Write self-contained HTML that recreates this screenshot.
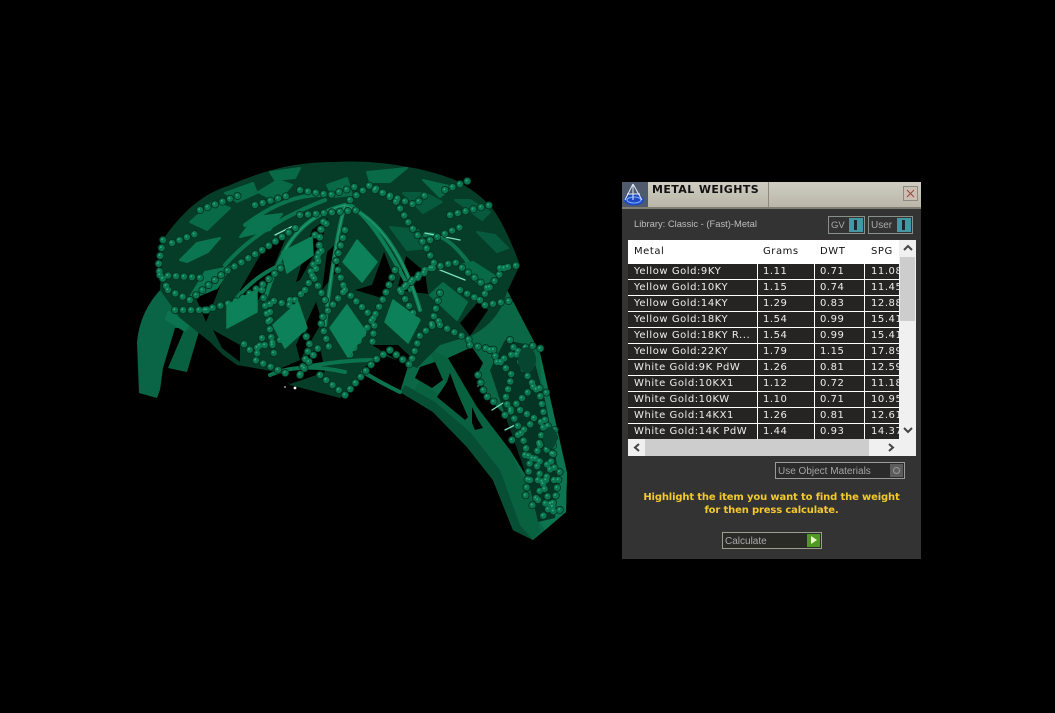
<!DOCTYPE html>
<html><head><meta charset="utf-8"><title>Metal Weights</title>
<style>
html,body{margin:0;padding:0;background:#000;width:1055px;height:713px;overflow:hidden}
body{position:relative;font-family:"DejaVu Sans","Liberation Sans",sans-serif}
.a{position:absolute;white-space:nowrap}
#panel{left:622px;top:182px;width:299px;height:377px;background:#333;overflow:hidden}
.row{position:absolute;left:6px;width:271px;height:15px;background:#262422;color:#eee;font-size:10px;line-height:15px;letter-spacing:.55px;overflow:hidden}
.row span{position:absolute;top:0}
.row span:nth-child(1){left:6px;width:120px;overflow:hidden}
.row span:nth-child(2){left:135px}
.row span:nth-child(3){left:192px}
.row span:nth-child(4){left:243px}
.v{position:absolute;top:58px;width:1px;height:199px;background:#fff}
</style></head><body>
<svg class="a" style="left:0;top:0" width="1055" height="713" viewBox="0 0 1055 713">
<defs>
<path id="chains" d="M163 240L158 268L168 290M172 243L200 232M160 275L205 278M168 290L190 300L225 272L262 250L300 225M205 310L240 300L262 285L290 260L330 220M262 290L270 330L275 360M262 338L255 360L290 375M270 320L270 300L290 305L305 290M290 300L310 345L300 375M305 290L318 265L320 235L325 215M325 300L310 270L322 250M338 270L345 290L320 320L330 350M345 290L375 320L372 345M300 375L320 345M345 395L320 375M345 395L375 360L390 350L410 365L420 335L440 320M350 200L370 185L395 200L410 225L425 245L435 265L400 290L420 325M375 190L415 205L430 190M400 290L425 270L455 262L490 290M395 270L385 295L375 315L350 355M480 300L505 267M440 325L470 340M450 215L490 205M430 240L465 225M300 190L330 195L360 185M300 215L360 210M200 210L240 195M255 205L290 195M445 190L470 180M175 310L210 310M280 340L250 350L240 340M460 290L480 300M500 268L520 265M485 305L515 300M440 293L430 330M345 230L335 265M470 345L495 350M478 375L485 395L498 405M490 350L512 375L505 400L520 430L530 460L525 500M510 340L525 372L540 395L545 420L535 460L545 490L555 515M497 362L530 345L545 350M505 415L535 385L550 395M520 410L555 430L550 470L530 510M512 440L535 420M525 455L560 470L555 500L540 520M530 480L555 480M538 500L560 510M540 445L555 455"/>
</defs>
<!-- left band -->
<path d="M139 393L137 342Q140 310 163 287L200 325L170 362L157 398Z" fill="#096545"/>
<path d="M168 368L180 332L200 328L187 372Z" fill="#096040"/>
<path d="M163 368L175 328L185 328L168 368L160 390Z" fill="#000"/>
<path d="M168 310L190 325L185 332L165 320Z" fill="#0b7350"/>
<!-- right band -->
<path d="M507 290L540 353L567 473L566 512L545 530L533 540L513 530L493 480L467 447L433 412L400 392L410 360L425 345L470 335Z" fill="#0a6846"/>
<path d="M540 353L567 473L566 512L545 530L535 515L548 500Z" fill="#0c7450"/>
<path d="M427 347L448 358L477 407L510 450L533 503L540 530L533 540L513 530L493 480L467 447L433 412L410 395L420 380L440 395L460 412Z" fill="#09623f"/>
<path d="M400 392L433 412L467 447L493 480L513 530L533 540L520 525L500 470L470 432L435 402L405 385Z" fill="#064f35"/>
<g fill="#000">
<path d="M448 358L472 347L483 363L478 373L490 400L507 417L513 427L520 453L527 470L535 490L510 450L477 407Z"/>
<path d="M420 367L435 362L443 380L432 388L415 378Z"/>
<path d="M447 382L437 397L465 420L468 417L457 392L450 373Z"/>
<path d="M472 423L475 430L483 428L478 420L472 407Z"/>
</g>
<path d="M505 340L530 345L545 400L558 470L555 518L538 522L528 480L505 415L490 370Z" fill="#043524"/>
<!-- dome base -->
<path d="M163 240Q172 225 190 208Q208 192 228 186Q250 176 272 170Q300 162 335 162Q370 160 402 166Q430 170 455 180Q478 192 492 208Q505 225 520 265L507 292Q500 320 473 335L440 345L417 368L383 355L363 368L353 388L340 398L290 385L277 372L237 365L223 355L210 342L180 318L160 290Z" fill="#053d29"/>
<!-- dark voids -->
<g fill="#000">
<path d="M240 290L262 252L288 232L265 288L248 318Z"/>
<path d="M300 280L322 240L328 218L312 230L296 282Z"/>
<path d="M322 290L338 270L340 240L327 252Z"/>
<path d="M300 360L322 322L316 302L296 345Z"/>
<path d="M355 290L382 298L395 280L384 252L372 285Z"/>
<path d="M397 290L428 294L425 272L406 256Z"/>
<path d="M196 298L224 276L206 322Z"/>
<path d="M213 330L240 345L240 362L222 348Z"/>
<path d="M272 372L300 360L320 347L325 372L290 384Z"/>
<path d="M372 345L398 345L412 358L400 362Z"/>
<path d="M460 323L478 302L488 310L470 336Z"/>
</g>
<!-- struts -->
<g fill="none" stroke-linecap="round">
<path d="M345 205Q305 215 285 250Q270 280 265 300M345 205Q335 240 325 325M345 205Q395 225 420 310M350 205Q375 220 410 290" stroke="#0c7e56" stroke-width="4"/>
<path d="M345 205Q305 215 285 250M345 205Q335 240 325 325M345 205Q395 225 420 310" stroke="#26976f" stroke-width="1.2"/>
<path d="M225 265Q260 225 325 200M245 225Q285 195 320 195M235 300Q260 270 290 262" stroke="#0b744f" stroke-width="4"/>
<path d="M425 235Q445 230 470 265M270 375Q300 362 345 372M300 368Q340 360 375 360M363 372Q385 385 400 392" stroke="#0b744f" stroke-width="4"/>
<path d="M425 233L460 240M440 270L465 280M275 235L295 225M478 386L484 382M492 410L503 403M505 430L515 425" stroke="#7fe0bf" stroke-width="1.3"/>
</g>
<!-- diamonds -->
<g fill="#0b7450" stroke="#0b7450" stroke-width="2" stroke-linejoin="round">
<path d="M240 237L255 217L282 214L270 230Z"/>
<path d="M180 260L197 243L220 238L208 252L187 262Z"/>
<path d="M190 297L205 272L230 267L217 288L195 297Z"/>
</g>
<g fill="#096a48" stroke="#096a48" stroke-width="2" stroke-linejoin="round">
<path d="M190 222L213 202L230 208L207 230Z"/>
<path d="M258 192L278 180L292 185L277 202Z"/>
<path d="M225 193L253 183L257 193L237 202Z"/>
<path d="M270 172L300 168L295 178L275 180Z"/>
<path d="M327 185L347 178L352 195L333 197Z"/>
<path d="M367 172L407 168L390 182L370 182Z"/>
<path d="M423 180L453 187L440 197Z"/>
<path d="M460 265L473 262L498 278L480 285Z"/>
<path d="M430 295L443 283L467 302L457 320Z"/>
</g>
<g fill="#075a3d" stroke="#075a3d" stroke-width="2" stroke-linejoin="round">
<path d="M403 193L425 193L442 202L423 213Z"/>
<path d="M455 200L470 200L490 212L482 220Z"/>
<path d="M477 232L495 235L508 248L497 252Z"/>
<path d="M390 227L418 230L428 248L407 250Z"/>
</g>
<!-- beads -->
<g fill="none" stroke-linecap="round" stroke-dasharray="0 8">
<use href="#chains" stroke="#03301f" stroke-width="8"/>
<use href="#chains" stroke="#0a7550" stroke-width="6.4"/>
<use href="#chains" stroke="#2da67c" stroke-width="2" transform="translate(-.7 -.7)"/>
</g>
<!-- front diamonds drawn over beads -->
<g fill="#0d8159" stroke="#0d8159" stroke-width="1.5" stroke-linejoin="round">
<path d="M227 305L257 290L257 312L227 328Z"/>
<path d="M282 252L312 237L313 255L287 273Z"/>
<path d="M273 325L298 302L307 328L285 348Z"/>
<path d="M330 328L347 305L366 332L348 357Z"/>
<path d="M343 262L357 240L377 262L362 282Z"/>
<path d="M385 322L393 300L420 320L408 343Z"/>
</g>
<g fill="#06452f"><ellipse cx="527" cy="360" rx="9" ry="13"/><ellipse cx="550" cy="438" rx="7" ry="11"/></g>
<g fill="#fff"><circle cx="295" cy="388" r="1.4"/><circle cx="285" cy="387" r=".8"/></g>
</svg>

<div class="a" id="panel">
<div class="a" style="left:0;top:0;width:299px;height:25px;background:linear-gradient(#cfccc2,#bab6a8)"></div>
<div class="a" style="left:146px;top:0;width:1px;height:25px;background:#8d897c"></div>
<div class="a" style="left:0;top:25px;width:299px;height:2px;background:#807d72"></div>
<svg class="a" style="left:0;top:0" width="26" height="25" viewBox="0 0 26 25"><rect width="26" height="25" fill="#4f5a6c"/><ellipse cx="12" cy="18" rx="10" ry="5.5" fill="#1d49c4"/><ellipse cx="12" cy="18" rx="7" ry="3" fill="none" stroke="#7fb0ff"/><path d="M11 2L3 18M11 2L20 18M5 12H18M11 2V18" stroke="#dfeaff" stroke-width="1" fill="none"/></svg>
<div class="a" style="left:30px;top:0;font:bold 11px/15px 'DejaVu Sans',sans-serif;letter-spacing:.4px;color:#111">METAL WEIGHTS</div>
<svg class="a" style="left:281px;top:4px" width="15" height="15" viewBox="0 0 15 15"><rect x=".5" y=".5" width="14" height="14" fill="#cbbfb4" stroke="#8e8a80"/><path d="M4 4L11 11M11 4L4 11" stroke="#9b4b42" stroke-width="1.1"/></svg>

<div class="a" style="left:12px;top:35px;font:9.4px/14px 'Liberation Sans',sans-serif;color:#bdbdbd">Library: Classic - (Fast)-Metal</div>
<div class="a" style="left:206px;top:34px;width:35px;height:16px;border:1px solid #88908a;color:#aaa;font:9.5px/17px 'Liberation Sans',sans-serif;text-indent:2px">GV<div class="a" style="right:1px;top:1px;width:14px;height:14px;background:#3f9aa6"><div class="a" style="left:5px;top:2px;width:3px;height:10px;background:#16282c"></div></div></div>
<div class="a" style="left:246px;top:34px;width:43px;height:16px;border:1px solid #88908a;color:#aaa;font:10px/17px 'Liberation Sans',sans-serif;text-indent:2px">User<div class="a" style="right:1px;top:1px;width:14px;height:14px;background:#3f9aa6"><div class="a" style="left:5px;top:2px;width:3px;height:10px;background:#16282c"></div></div></div>

<div class="a" style="left:6px;top:58px;width:288px;height:216px;background:#fff"></div>
<div class="a" style="left:12px;top:63px;font-size:10px;line-height:14px;letter-spacing:.55px;color:#111">Metal</div>
<div class="a" style="left:141px;top:63px;font-size:10px;line-height:14px;letter-spacing:.55px;color:#111">Grams</div>
<div class="a" style="left:198px;top:63px;font-size:10px;line-height:14px;letter-spacing:.55px;color:#111">DWT</div>
<div class="a" style="left:249px;top:63px;font-size:10px;line-height:14px;letter-spacing:.55px;color:#111">SPG</div>

<div class="row" style="top:82px"><span>Yellow Gold:9KY</span><span>1.11</span><span>0.71</span><span>11.08</span></div>
<div class="row" style="top:98px"><span>Yellow Gold:10KY</span><span>1.15</span><span>0.74</span><span>11.45</span></div>
<div class="row" style="top:114px"><span>Yellow Gold:14KY</span><span>1.29</span><span>0.83</span><span>12.88</span></div>
<div class="row" style="top:130px"><span>Yellow Gold:18KY</span><span>1.54</span><span>0.99</span><span>15.41</span></div>
<div class="row" style="top:146px"><span>Yellow Gold:18KY R...</span><span>1.54</span><span>0.99</span><span>15.41</span></div>
<div class="row" style="top:162px"><span>Yellow Gold:22KY</span><span>1.79</span><span>1.15</span><span>17.89</span></div>
<div class="row" style="top:178px"><span>White Gold:9K PdW</span><span>1.26</span><span>0.81</span><span>12.59</span></div>
<div class="row" style="top:194px"><span>White Gold:10KX1</span><span>1.12</span><span>0.72</span><span>11.18</span></div>
<div class="row" style="top:210px"><span>White Gold:10KW</span><span>1.10</span><span>0.71</span><span>10.95</span></div>
<div class="row" style="top:226px"><span>White Gold:14KX1</span><span>1.26</span><span>0.81</span><span>12.61</span></div>
<div class="row" style="top:242px"><span>White Gold:14K PdW</span><span>1.44</span><span>0.93</span><span>14.37</span></div>
<div class="v" style="left:135px"></div><div class="v" style="left:192px"></div><div class="v" style="left:242px"></div>

<div class="a" style="left:277px;top:58px;width:17px;height:199px;background:#f0f0f0"></div>
<div class="a" style="left:278px;top:75px;width:15px;height:64px;background:#cdcdcd"></div>
<div class="a" style="left:6px;top:257px;width:288px;height:17px;background:#f0f0f0"></div>
<div class="a" style="left:23px;top:257px;width:224px;height:17px;background:#cdcdcd"></div>
<svg class="a" style="left:0;top:0" width="299" height="280" viewBox="0 0 299 280" fill="none" stroke="#444" stroke-width="2"><path d="M282 68L286 64L290 68M282 246L286 250L290 246M17 262L13 265.500L17 269M267 262L271 265.500L267 269"/></svg>

<div class="a" style="left:153px;top:280px;width:128px;height:15px;border:1px solid #9a9a9a;background:#2b2b2b;color:#a5a5a5;font:10px/18px 'Liberation Sans',sans-serif;letter-spacing:0;text-indent:2px">Use Object Materials<div class="a" style="right:1px;top:1px;width:13px;height:13px;background:#5d5d5d"><div class="a" style="left:3px;top:3px;width:5px;height:5px;border:1px solid #999;border-radius:50%"></div></div></div>

<div class="a" style="left:0;top:309px;width:299px;text-align:center;font:bold 10px/13px 'DejaVu Sans',sans-serif;letter-spacing:-.15px;color:#f3c92e;white-space:normal">Highlight the item you want to find the weight<br>for then press calculate.</div>

<div class="a" style="left:100px;top:350px;width:98px;height:15px;border:1px solid #9aa08e;background:#2a2a26;color:#aaa;font:10px/17px 'Liberation Sans',sans-serif;letter-spacing:0;text-indent:2px">Calculate<div class="a" style="right:1px;top:1px;width:13px;height:13px;background:#4f9a25"><div class="a" style="left:4px;top:2px;width:0;height:0;border-left:6px solid #eaf7d0;border-top:4.500px solid transparent;border-bottom:4.500px solid transparent"></div></div></div>
</div>
</body></html>
